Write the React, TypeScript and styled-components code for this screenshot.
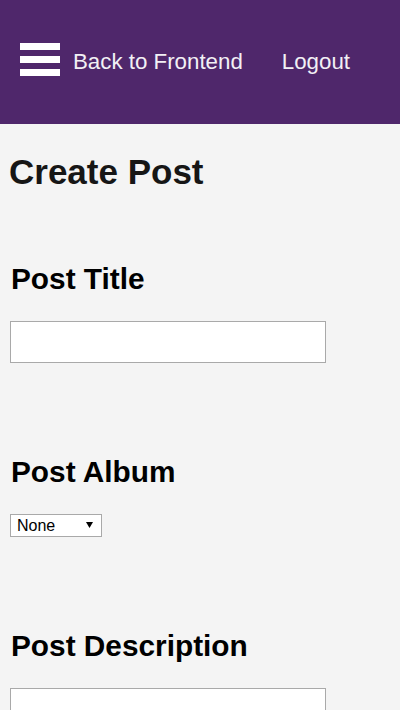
import React from 'react';
import styled, { createGlobalStyle } from 'styled-components';

const GlobalStyle = createGlobalStyle`
  html, body {
    margin: 0;
    padding: 0;
    background: #f4f4f4;
    font-family: "Liberation Sans", Arial, sans-serif;
  }
`;

const TopBar = styled.header`
  height: 124px;
  background: #4f276b;
  display: flex;
  align-items: center;
  padding: 0 0 5px 20px;
  box-sizing: border-box;
`;

const MenuButton = styled.button`
  display: flex;
  flex-direction: column;
  gap: 6px;
  width: 40px;
  padding: 0;
  margin: 0 13px 0 0;
  background: none;
  border: none;
  cursor: pointer;
`;

const MenuBar = styled.span`
  display: block;
  height: 7px;
  width: 40px;
  background: #ffffff;
`;

const NavLink = styled.a<{ $gap?: number }>`
  color: #f2f0f5;
  font-size: 22.3px;
  text-decoration: none;
  margin: 5px 0 0 ${props => props.$gap ?? 0}px;
  line-height: 1;
`;

const Main = styled.main`
  padding: 28px 0 0 0;
`;

const PageTitle = styled.h1`
  margin: 0 0 70px 9px;
  font-size: 35px;
  line-height: 1.15;
  font-weight: 700;
  color: #161616;
`;

const Field = styled.div`
  margin: 0 0 92px 10px;
`;

const Label = styled.h2`
  margin: 0 0 24.5px 1px;
  font-size: 29.8px;
  line-height: 1.15;
  font-weight: 700;
  color: #000;
`;

const TextInput = styled.input`
  display: block;
  box-sizing: border-box;
  width: 316px;
  height: 42px;
  border: 1px solid #a9a9a9;
  background: #fff;
  margin: 0;
`;

const SelectWrap = styled.div`
  position: relative;
  width: 92px;
  height: 23px;
`;

const Select = styled.select`
  appearance: none;
  -webkit-appearance: none;
  box-sizing: border-box;
  width: 92px;
  height: 23px;
  border: 1px solid #a9a9a9;
  border-radius: 0;
  background: #fff;
  font-family: "Liberation Sans", Arial, sans-serif;
  font-size: 16px;
  color: #000;
  padding: 0 0 0 6px;
  margin: 0;
`;

const Arrow = styled.svg`
  position: absolute;
  right: 9px;
  top: 8px;
  pointer-events: none;
`;

export default function App() {
  return (
    <>
      <GlobalStyle />
      <TopBar>
        <MenuButton aria-label="Menu">
          <MenuBar />
          <MenuBar />
          <MenuBar />
        </MenuButton>
        <NavLink href="#">Back to Frontend</NavLink>
        <NavLink href="#" $gap={39}>Logout</NavLink>
      </TopBar>
      <Main>
        <PageTitle>Create Post</PageTitle>
        <Field>
          <Label>Post Title</Label>
          <TextInput type="text" />
        </Field>
        <Field>
          <Label>Post Album</Label>
          <SelectWrap>
            <Select defaultValue="none">
              <option value="none">None</option>
            </Select>
            <Arrow width="7" height="7" viewBox="0 0 7 7">
              <polygon points="0,0 7,0 3.5,6" fill="#000" />
            </Arrow>
          </SelectWrap>
        </Field>
        <Field>
          <Label>Post Description</Label>
          <TextInput type="text" />
        </Field>
      </Main>
    </>
  );
}
